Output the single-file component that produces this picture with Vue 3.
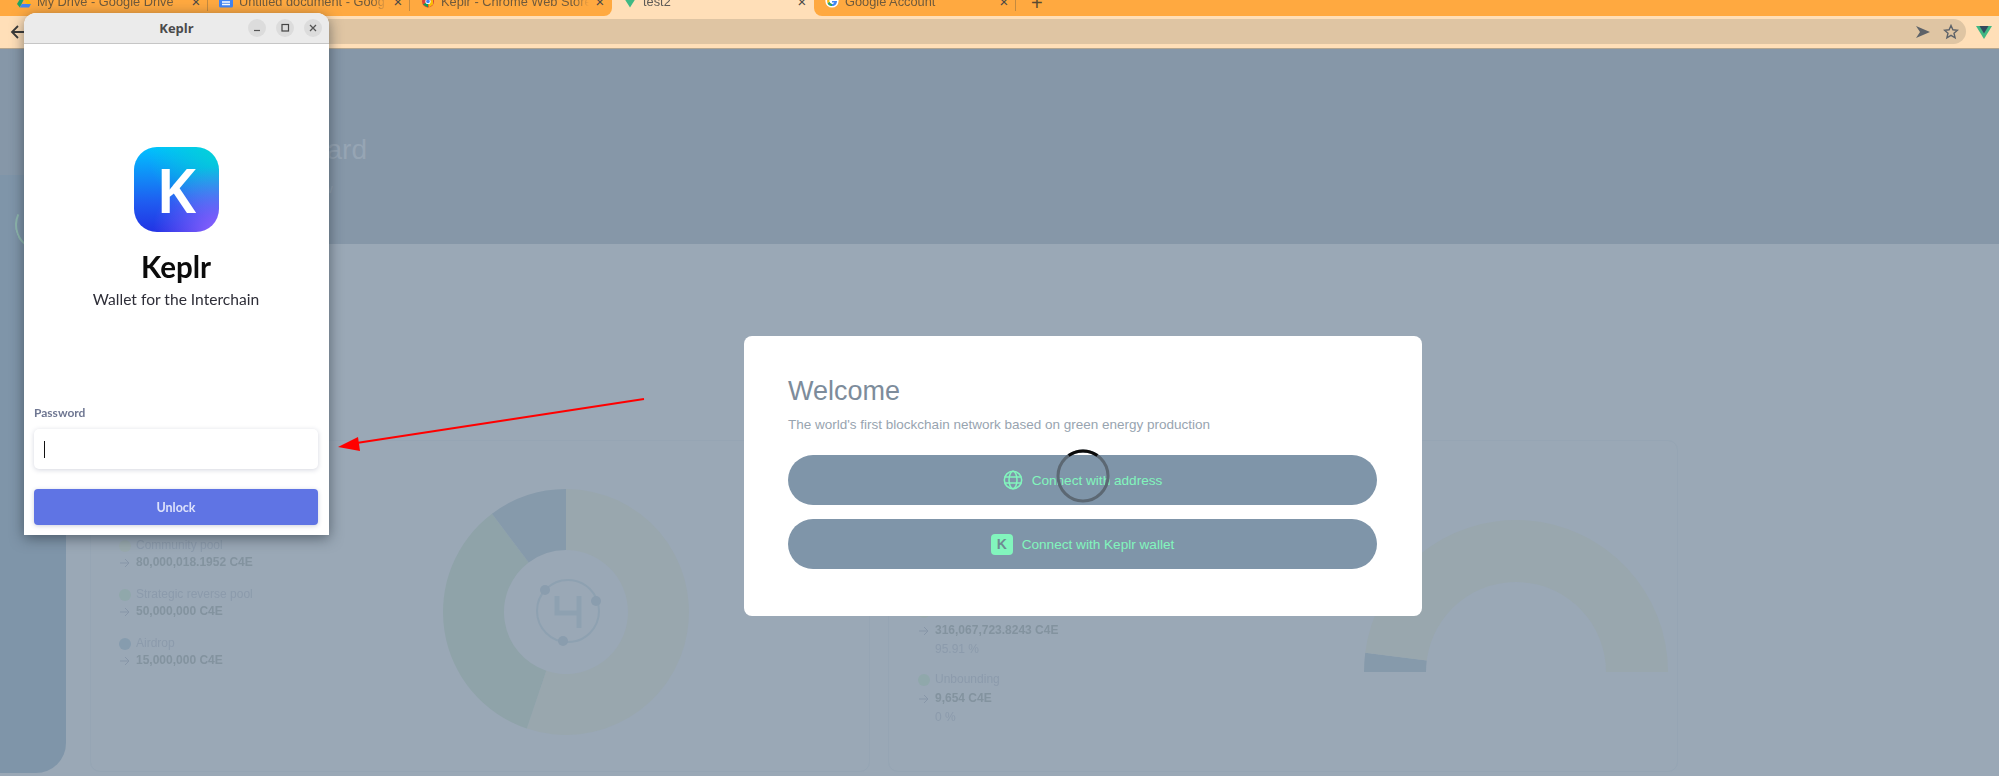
<template>
  <div class="screen">
    <div class="tabstrip">
      <div
        v-for="(tab, index) in tabs"
        :key="tab.title"
        class="tab"
        :class="{ active: tab.active, sep: tab.sep, 'before-active': tabs[index + 1]?.active, 'after-active': tabs[index - 1]?.active }"
      >
        <svg class="favicon" viewBox="0 0 14 14">
          <g v-if="tab.icon === 'drive'" transform="translate(0 1.5)">
            <path d="M5 0h4l5 8.5H10z" fill="#fbbc04" />
            <path d="M5 0l2 3.6L2.8 12 0 8.5z" fill="#1fa463" />
            <path d="M2.8 12l2-3.5H14L12 12z" fill="#4285f4" />
          </g>
          <g v-else-if="tab.icon === 'docs'" transform="translate(0 .5)">
            <rect y="-2" width="14" height="15" rx="1.5" fill="#4285f4" />
            <path d="M3 7.500h8M3 10h8" stroke="#fff" stroke-width="1.300" />
          </g>
          <g v-else-if="tab.icon === 'chrome'" transform="translate(0 1.5)">
            <circle cx="7" cy="6" r="6" fill="#db4437" />
            <path d="M7 6L2 9l5 3z" fill="#0f9d58" />
            <path d="M7 6l5-2 0 5-4 3z" fill="#fbbc04" />
            <circle cx="7" cy="6" r="2.600" fill="#fff" />
            <circle cx="7" cy="6" r="1.800" fill="#4285f4" />
          </g>
          <path v-else-if="tab.icon === 'vue'" d="M1 4h12L7 13.500z" fill="#3fb984" />
          <g v-else transform="translate(0 4)">
            <circle cx="7" cy="3" r="6.600" fill="#fff" />
            <path d="M7 3h5c0 3-2 5-5 5-2 0-3.600-1-4.400-2.700l2-1.300C5 5 6 6 7 6c1.200 0 2-.6 2.300-1.500H7z" fill="#4285f4" />
            <path d="M2.600 5.300C2 4 2 2.500 2.600 1L4.600 2.400C4.400 3 4.400 3.400 4.600 4z" fill="#fbbc04" />
            <path d="M7 8c-2 0-3.600-1-4.400-2.700l2-1.300C5 5 6 6 7 6z" fill="#34a853" />
          </g>
        </svg>
        <span class="tab-title">{{ tab.title }}</span>
        <span class="tab-close">×</span>
      </div>
      <span class="new-tab">+</span>
    </div>

    <div class="toolbar">
      <svg class="back" viewBox="0 0 16 16">
        <path d="M15 8H2M8 2L2 8l6 6" fill="none" stroke="#3b3a38" stroke-width="1.800" />
      </svg>
      <div class="omnibox">
        <svg class="omni-icon" viewBox="0 0 16 16">
          <path d="M1 2l14 6-14 6 4-6z" fill="#5d6268" />
        </svg>
        <svg class="omni-icon" viewBox="0 0 16 16">
          <path d="M8 1.500l1.900 4.300 4.600.4-3.500 3 1.100 4.600L8 11.400l-4.100 2.400L5 9.200l-3.500-3 4.600-.4z" fill="none" stroke="#5d6268" stroke-width="1.400" />
        </svg>
      </div>
      <svg class="vue-ext" viewBox="0 0 16 14">
        <path d="M0 1h16L8 14z" fill="#41b883" />
        <path d="M3.500 1h9L8 8.500z" fill="#35495e" />
      </svg>
    </div>

    <div class="page">
      <aside class="sidebar">
        <div class="side-logo"></div>
      </aside>

      <main class="dashboard">
        <header class="dash-header">
          <h1>Dashboard</h1>
          <p>Network overview</p>
        </header>

        <section class="cards">
          <div class="card first">
            <div class="legend">
              <div v-for="item in supply" :key="item.label" class="legend-item">
                <div class="legend-label"><i :style="{ background: item.color }"></i>{{ item.label }}</div>
                <div class="legend-value">
                  <svg class="arrow" viewBox="0 0 10 10"><path d="M0 5h9M5 1l4 4-4 4" fill="none" stroke="#8796a8" stroke-width="1" /></svg>
                  {{ item.value }}
                </div>
              </div>
            </div>
            <svg class="donut" width="250" height="250" viewBox="0 0 250 250">
              <path v-for="s in donutSlices" :key="s.color" :d="s.d" :fill="s.color" />
              <circle cx="127" cy="124" r="31" fill="none" stroke="#8ea1b1" stroke-width="2" />
              <circle cx="104" cy="103" r="5" fill="#8a9dae" />
              <circle cx="155" cy="114" r="5" fill="#8a9dae" />
              <circle cx="122" cy="154" r="5" fill="#8a9dae" />
              <path d="M116 109v17h22M138 109v32" fill="none" stroke="#8ea1b1" stroke-width="5" />
            </svg>
          </div>

          <div class="card second">
            <div class="legend">
              <div v-for="item in staking" :key="item.label" class="legend-item wide">
                <div class="legend-label"><i :style="{ background: item.color }"></i>{{ item.label }}</div>
                <div class="legend-value">
                  <svg class="arrow" viewBox="0 0 10 10"><path d="M0 5h9M5 1l4 4-4 4" fill="none" stroke="#8796a8" stroke-width="1" /></svg>
                  {{ item.value }}
                </div>
                <div class="legend-pct">{{ item.pct }}</div>
              </div>
            </div>
            <svg class="gauge" width="304" height="152" viewBox="0 0 304 152">
              <path v-for="s in gaugeSlices" :key="s.color" :d="s.d" :fill="s.color" />
            </svg>
          </div>
        </section>
      </main>

      <div class="modal">
        <h2>Welcome</h2>
        <p>The world's first blockchain network based on green energy production</p>
        <button class="connect">
          <svg class="globe" viewBox="0 0 20 20">
            <g fill="none" stroke="#82f5bd" stroke-width="1.500">
              <circle cx="10" cy="10" r="8.700" />
              <ellipse cx="10" cy="10" rx="4" ry="8.700" />
              <path d="M1.500 7h17M1.500 13h17" />
            </g>
          </svg>
          Connect with address
        </button>
        <button class="connect">
          <span class="k-badge">K</span>
          Connect with Keplr wallet
        </button>
        <svg class="spinner" width="54" height="54" viewBox="0 0 54 54">
          <circle cx="27" cy="27" r="25" fill="none" stroke="#5c6873" stroke-width="3" />
          <path d="M12.700 6.500A25 25 0 0 1 41.300 6.500" fill="none" stroke="#0a0a0a" stroke-width="3" />
        </svg>
      </div>
    </div>

    <svg class="annotation" width="330" height="70" viewBox="0 0 330 70">
      <path d="M314 9L20 54" stroke="#f00" stroke-width="2" />
      <path d="M8 57l20-10 2 14z" fill="#f00" />
    </svg>

    <div class="keplr-window">
      <div class="titlebar">
        <span class="win-title">Keplr</span>
        <div class="win-buttons">
          <span class="win-btn"><svg viewBox="0 0 10 10"><path d="M2 7.500h6" stroke="#555" stroke-width="1.200" /></svg></span>
          <span class="win-btn"><svg viewBox="0 0 10 10"><rect x="2" y="1.500" width="6.500" height="6.500" fill="none" stroke="#444" stroke-width="1.200" /></svg></span>
          <span class="win-btn"><svg viewBox="0 0 10 10"><path d="M2 2l6 6M8 2l-6 6" stroke="#555" stroke-width="1.300" /></svg></span>
        </div>
      </div>
      <div class="win-body">
        <div class="brand">
          <div class="logo">K</div>
          <div class="brand-name">Keplr</div>
          <div class="brand-sub">Wallet for the Interchain</div>
        </div>
        <label class="pw-label">Password</label>
        <div class="pw-input"><span class="caret"></span></div>
        <button class="unlock">Unlock</button>
      </div>
    </div>
  </div>
</template>

<script setup>
const tabs = [
  { title: 'My Drive - Google Drive', icon: 'drive', sep: true },
  { title: 'Untitled document - Goog', icon: 'docs', sep: true },
  { title: 'Keplr - Chrome Web Store', icon: 'chrome' },
  { title: 'test2', icon: 'vue', active: true },
  { title: 'Google Account', icon: 'google', sep: true }
]

const supply = [
  { label: 'Community pool', value: '80,000,018.1952 C4E', color: '#99a9ad' },
  { label: 'Strategic reverse pool', value: '50,000,000 C4E', color: '#90a8ab' },
  { label: 'Airdrop', value: '15,000,000 C4E', color: '#869cae' }
]

const staking = [
  { label: 'Bonded', value: '316,067,723.8243 C4E', pct: '95.91 %', color: '#99a9ad' },
  { label: 'Unbounding', value: '9,654 C4E', pct: '0 %', color: '#90a8ab' }
]

// angles are clockwise from twelve o'clock
const point = (cx, cy, r, deg) => {
  const a = (deg - 90) * Math.PI / 180
  return `${(cx + r * Math.cos(a)).toFixed(2)} ${(cy + r * Math.sin(a)).toFixed(2)}`
}

const ring = (cx, cy, outer, inner, from, to) => {
  const large = to - from > 180 ? 1 : 0
  return `M${point(cx, cy, outer, from)}A${outer} ${outer} 0 ${large} 1 ${point(cx, cy, outer, to)}` +
    `L${point(cx, cy, inner, to)}A${inner} ${inner} 0 ${large} 0 ${point(cx, cy, inner, from)}Z`
}

const donutSlices = [
  { color: '#99a7ae', d: ring(125, 125, 123, 62, 0, 198.6) },
  { color: '#8fa3a9', d: ring(125, 125, 123, 62, 198.6, 323) },
  { color: '#869aab', d: ring(125, 125, 123, 62, 323, 360) }
]

const gaugeSlices = [
  { color: '#869aab', d: ring(152, 152, 152, 90, 270, 277.3) },
  { color: '#99a7ae', d: ring(152, 152, 152, 90, 277.3, 450) }
]
</script>

<style scoped>
.screen {
  position: relative;
  width: 1999px;
  height: 776px;
  overflow: hidden;
  background: #9aa8b6;
  font-family: "Liberation Sans", Arial, sans-serif;
}

/* browser chrome */
.tabstrip {
  display: flex;
  height: 16px;
  padding-left: 6px;
  background: #ffa940;
}

.tab {
  position: relative;
  z-index: 1;
  flex: none;
  width: 202px;
  min-width: 0;
  box-sizing: border-box;
  display: flex;
  align-items: center;
  height: 16px;
  padding: 0 5px 12px 11px;
  background: #ffa940;
  color: #6f5a3c;
  font-size: 12.800px;
}

.tab.sep::after {
  content: "";
  position: absolute;
  right: 0;
  top: 0;
  height: 11px;
  border-right: 1px solid #c48a3f;
}

.tab.active {
  z-index: 0;
  background: #ffdfb8;
  color: #5d5a56;
}

.tab.active::before,
.tab.active::after {
  content: "";
  position: absolute;
  bottom: 0;
  width: 10px;
  height: 10px;
  background: #ffdfb8;
}

.tab.active::before {
  left: -10px;
}

.tab.active::after {
  right: -10px;
}

.tab.before-active {
  border-bottom-right-radius: 8px;
}

.tab.after-active {
  border-bottom-left-radius: 8px;
}

.favicon {
  flex: none;
  width: 14px;
  height: 14px;
  margin-right: 6px;
  margin-top: -2px;
}

.tab-title {
  flex: 1;
  min-width: 0;
  overflow: hidden;
  white-space: nowrap;
  line-height: 16px;
  -webkit-mask-image: linear-gradient(to right, #000 90%, transparent);
  mask-image: linear-gradient(to right, #000 90%, transparent);
}

.tab-close {
  flex: none;
  width: 14px;
  margin-left: 4px;
  color: #4d4a46;
  font-size: 15px;
  line-height: 16px;
  text-align: center;
}

.new-tab {
  margin: -5px 0 0 15px;
  color: #5a4a30;
  font-size: 20px;
  line-height: 16px;
}

.toolbar {
  display: flex;
  align-items: center;
  box-sizing: border-box;
  height: 33px;
  padding: 3px 7px 4px 10px;
  background: #ffdfb8;
  border-bottom: 1px solid #b5a68f;
}

.back {
  width: 16px;
  height: 16px;
}

.omnibox {
  flex: 1;
  display: flex;
  align-items: center;
  justify-content: flex-end;
  gap: 12px;
  height: 25px;
  margin: 0 10px 0 95px;
  padding-right: 7px;
  border-radius: 13px;
  background: #dfc5a3;
}

.omni-icon {
  width: 16px;
  height: 16px;
}

.vue-ext {
  width: 16px;
  height: 14px;
}

/* dimmed page behind the modal */
.page {
  position: relative;
  display: flex;
  height: 727px;
  background: #9aa8b6;
}

.sidebar {
  position: relative;
  z-index: 1;
  flex: none;
  box-sizing: border-box;
  width: 66px;
  height: 598px;
  margin-top: 126px;
  padding: 24px 0 0 15px;
  background: #7f95a9;
  border-bottom-right-radius: 30px;
}

.side-logo {
  width: 52px;
  height: 52px;
  box-sizing: border-box;
  border: 2px solid transparent;
  border-left-color: #8fb8ae;
  border-bottom-color: #8fb8ae;
  border-radius: 50%;
  transform: rotate(-20deg);
}

.dashboard {
  flex: 1;
  min-width: 0;
  filter: blur(0.6px);
}

.dash-header {
  position: relative;
  box-sizing: border-box;
  height: 195px;
  margin-left: -66px;
  padding: 84px 0 0 230px;
  background: #8697a8;
}

.dash-header h1 {
  margin: 0;
  color: #96a5b4;
  font-size: 28px;
  font-weight: 400;
  line-height: 34px;
}

.dash-header p {
  margin: 14px 0 0;
  color: #93a2b1;
  font-size: 13px;
}

.cards {
  display: grid;
  grid-template-columns: 780px 790px;
  gap: 18px;
  padding: 196px 0 0 24px;
}

.card {
  display: flex;
  box-sizing: border-box;
  height: 332px;
  border: 1px solid rgba(130, 150, 170, 0.14);
  border-radius: 10px;
}

.card.first {
  padding-left: 28px;
}

.card.first .legend {
  width: 322px;
  padding-top: 96px;
}

.card.second {
  padding-left: 29px;
}

.card.second .legend {
  width: 446px;
  padding-top: 161px;
}

.donut {
  margin-top: 46px;
}

.gauge {
  margin-top: 79px;
}

.legend-item {
  margin-bottom: 15px;
  font-size: 12px;
  line-height: 17px;
}

.legend-item.wide {
  margin-bottom: 11px;
  line-height: 19px;
}

.legend-label {
  display: flex;
  align-items: center;
  color: #8c9bac;
}

.legend-label i {
  flex: none;
  width: 12px;
  height: 12px;
  margin-right: 5px;
  border-radius: 50%;
}

.legend-value {
  display: flex;
  align-items: center;
  color: #83939f;
  font-weight: 700;
}

.arrow {
  flex: none;
  width: 10px;
  height: 10px;
  margin: 0 6px 0 1px;
}

.legend-pct {
  padding-left: 17px;
  color: #8c9bac;
}

/* modal */
.modal {
  position: absolute;
  z-index: 2;
  left: 744px;
  top: 287px;
  box-sizing: border-box;
  width: 678px;
  height: 280px;
  padding: 39px 45px 0 44px;
  background: #fff;
  border-radius: 8px;
}

.modal h2 {
  margin: 0;
  color: #7d8c9b;
  font-size: 27px;
  font-weight: 400;
  line-height: 32px;
}

.modal p {
  margin: 9px 0 21px;
  color: #98a4b0;
  font-size: 13.500px;
  line-height: 18px;
}

.connect {
  display: flex;
  align-items: center;
  justify-content: center;
  gap: 9px;
  width: 100%;
  height: 50px;
  margin-bottom: 14px;
  padding: 0;
  border: none;
  border-radius: 25px;
  background: #7f95a9;
  color: #82f5bd;
  font-family: inherit;
  font-size: 13.600px;
}

.globe {
  width: 20px;
  height: 20px;
}

.k-badge {
  width: 22px;
  height: 21px;
  border-radius: 4px;
  background: #82f5bd;
  color: #6f8a92;
  font-size: 14px;
  font-weight: 700;
  line-height: 21px;
  text-align: center;
}

.spinner {
  position: absolute;
  left: 312px;
  top: 113px;
}

/* annotation */
.annotation {
  position: absolute;
  z-index: 3;
  left: 330px;
  top: 390px;
}

/* keplr popup window */
.keplr-window {
  position: absolute;
  z-index: 3;
  left: 24px;
  top: 13px;
  width: 305px;
  height: 522px;
  background: #fff;
  border-radius: 12px 12px 0 0;
  box-shadow: 0 3px 14px rgba(30, 40, 50, 0.55);
}

.titlebar {
  position: relative;
  box-sizing: border-box;
  height: 31px;
  display: flex;
  align-items: center;
  justify-content: center;
  background: #ebebeb;
  border-bottom: 1px solid #c6c6c6;
  border-radius: 12px 12px 0 0;
}

.win-title {
  color: #4a4a4a;
  font-family: "Open Sans", sans-serif;
  font-size: 13px;
  font-weight: 700;
}

.win-buttons {
  position: absolute;
  right: 7px;
  top: 6px;
  display: flex;
  gap: 10px;
}

.win-btn {
  display: flex;
  align-items: center;
  justify-content: center;
  width: 18px;
  height: 18px;
  border-radius: 50%;
  background: #dcdcdc;
}

.win-btn svg {
  width: 10px;
  height: 10px;
}

.win-body {
  display: flex;
  flex-direction: column;
  padding: 0 11px 0 10px;
}

.brand {
  display: flex;
  flex-direction: column;
  align-items: center;
  padding-top: 103px;
  height: 254px;
}

.logo {
  width: 85px;
  height: 85px;
  border-radius: 23px;
  background:
    radial-gradient(circle at 100% 100%, #8f63ff 0, rgba(143, 99, 255, 0) 55%),
    radial-gradient(circle at 100% 0, #04d2d6 0, rgba(4, 210, 214, 0) 60%),
    linear-gradient(180deg, #00c2ff 0%, #1f5cf0 65%, #2233e4 100%);
  color: #fff;
  font-family: "Noto Sans", sans-serif;
  font-size: 62px;
  font-weight: 600;
  line-height: 85px;
  text-align: center;
}

.brand-name {
  margin-top: 17px;
  color: #0b0b0b;
  font-family: Lato, sans-serif;
  font-size: 29.500px;
  font-weight: 700;
  line-height: 36px;
}

.brand-sub {
  margin-top: 4px;
  color: #2e2e38;
  font-family: Lato, sans-serif;
  font-size: 15.600px;
  line-height: 20px;
}

.pw-label {
  margin-top: 4px;
  color: #6f7792;
  font-family: Lato, sans-serif;
  font-size: 12px;
  font-weight: 700;
  line-height: 16px;
}

.pw-input {
  display: flex;
  align-items: center;
  box-sizing: border-box;
  height: 40px;
  margin-top: 8px;
  padding-left: 10px;
  background: #fff;
  border-radius: 5px;
  box-shadow: 0 1px 5px rgba(60, 70, 110, 0.22);
}

.caret {
  width: 1px;
  height: 17px;
  background: #111;
}

.unlock {
  height: 36px;
  margin-top: 20px;
  border: none;
  border-radius: 4px;
  background: #5f74e4;
  color: #dde2fb;
  font-family: Lato, sans-serif;
  font-size: 12.500px;
  font-weight: 700;
  box-shadow: 0 1px 4px rgba(60, 70, 110, 0.25);
}
</style>
